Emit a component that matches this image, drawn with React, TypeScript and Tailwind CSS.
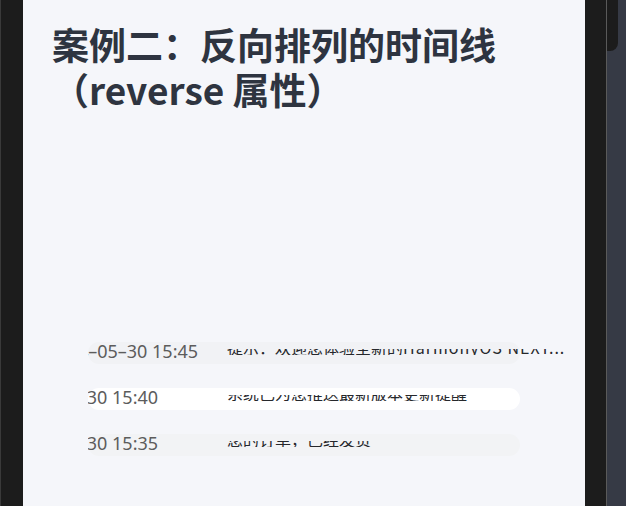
import React from "react";

type Row = {
  time: string;
  shift: string;
  text: React.ReactNode;
  bg: string;
};

const rows: Row[] = [
  {
    time: "2024–05–30 15:45",
    shift: "ml-[-41px]",
    text: (
      <>
        提示：欢迎您体验全新的
        <span className="tracking-[1px]">HarmonyOS NEXT...</span>
      </>
    ),
    bg: "bg-[#f1f2f5]",
  },
  {
    time: "2024–05–30 15:40",
    shift: "ml-[-81px]",
    text: "系统已为您推送最新版本更新提醒",
    bg: "bg-white",
  },
  {
    time: "2024–05–30 15:35",
    shift: "ml-[-81px]",
    text: "您的订单，已经发货",
    bg: "bg-[#f2f3f5]",
  },
];

function TimelineRow({ row }: { row: Row }) {
  return (
    <div className={`flex h-[22px] w-[432px] rounded-full ${row.bg}`}>
      <div className="w-[139px] shrink-0 self-start overflow-hidden">
        <span
          className={`block whitespace-nowrap font-['Noto_Sans',sans-serif] text-[18px] leading-[18px] text-[#5c5c5c] ${row.shift}`}
        >
          {row.time}
        </span>
      </div>
      <div className="mt-[7px] h-[6px] w-[345px] shrink-0 self-start overflow-hidden">
        <div className="mt-[-10px] overflow-hidden whitespace-nowrap font-['Noto_Sans_CJK_SC',sans-serif] text-[16px] leading-[16px] text-[#26282c]">
          {row.text}
        </div>
      </div>
    </div>
  );
}

export default function App() {
  return (
    <div className="flex h-[506px] w-[626px] overflow-hidden bg-[#1c1c1c]">
      <div className="w-[23px] shrink-0 border-l border-[#3a3a3a] bg-[#1c1c1c]" />
      <main className="w-[562px] shrink-0 bg-[#f5f6fa] px-[29px] pt-[22px]">
        <h2 className="font-['Noto_Sans_CJK_SC',sans-serif] text-[37px] font-bold leading-[45px] text-[#2e3440]">
          案例二：反向排列的时间线（reverse 属性）
        </h2>
        <div className="ml-[36px] mt-[230px] flex flex-col gap-[24px]">
          {rows.map((row) => (
            <TimelineRow key={row.time} row={row} />
          ))}
        </div>
      </main>
      <div className="w-[21px] shrink-0 bg-[#1c1c1c]" />
      <div className="w-px shrink-0 bg-[#5a5a5a]" />
      <div className="flex-1 bg-[#363a45]">
        <div className="h-[51px] w-[11px] rounded-br-[8px] bg-[#1c1c1c]" />
      </div>
    </div>
  );
}
